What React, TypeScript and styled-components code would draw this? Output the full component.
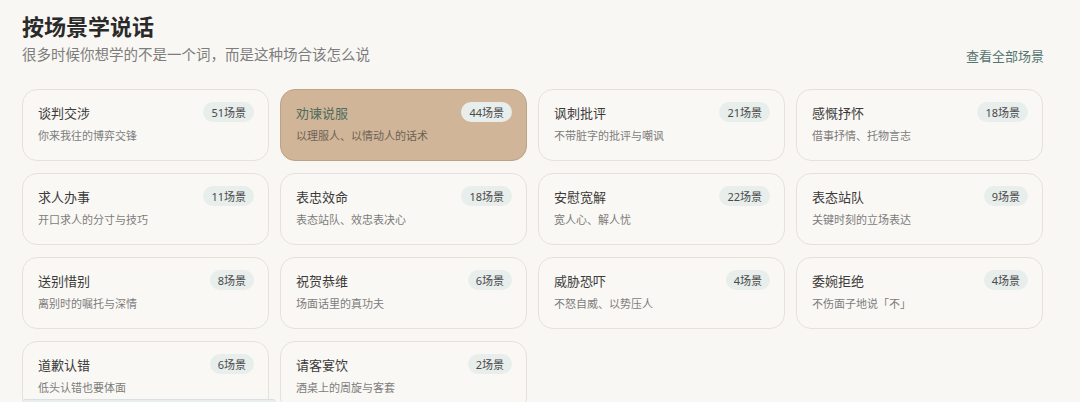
import React from "react";
import styled, { createGlobalStyle } from "styled-components";

const GlobalStyle = createGlobalStyle`
    html, body {
        margin: 0;
        padding: 0;
        background: #f9f7f3;
        font-family: "Noto Sans CJK SC", "Noto Sans", sans-serif;
        overflow: hidden;
    }
`;

const Page = styled.div`
    padding: 10px 36px 0 22px;
`;

const Header = styled.div`
    display: flex;
    align-items: flex-end;
    justify-content: space-between;
    margin-bottom: 24px;
`;

const Title = styled.h1`
    margin: 0;
    font-size: 22px;
    font-weight: 700;
    line-height: 30px;
    color: #2a2a2a;
`;

const Subtitle = styled.p`
    margin: 3px 0 0;
    font-size: 14.5px;
    line-height: 22px;
    color: #7d7d7d;
`;

const MoreLink = styled.a`
    font-size: 13px;
    line-height: 20px;
    color: #557571;
    text-decoration: none;
    margin-bottom: -1px;
`;

const Grid = styled.div`
    display: grid;
    grid-template-columns: repeat(4, 247px);
    column-gap: 11px;
    row-gap: 12px;
`;

const Card = styled.div<{ $active?: boolean }>`
    box-sizing: border-box;
    height: 72px;
    padding: 12px 14px 0 15px;
    border-radius: 15px;
    border: 1px solid ${(p) => (p.$active ? "#bca286" : "#e7e1d9")};
    background: ${(p) => (p.$active ? "#d0b598" : "#faf8f4")};
`;

const CardTop = styled.div`
    display: flex;
    align-items: center;
    justify-content: space-between;
    height: 20px;
`;

const CardName = styled.span<{ $active?: boolean }>`
    font-size: 13px;
    color: ${(p) => (p.$active ? "#4d6c5b" : "#3a3a3a")};
`;

const Badge = styled.span`
    display: inline-flex;
    align-items: center;
    height: 20px;
    padding: 0 8px;
    border-radius: 10px;
    background: #e7eeec;
    color: #4a4a4a;
    font-family: "Noto Sans", "Noto Sans CJK SC", sans-serif;
    font-size: 11px;
`;

const CardDesc = styled.div<{ $active?: boolean }>`
    margin-top: 5px;
    font-size: 11px;
    line-height: 16px;
    color: ${(p) => (p.$active ? "#6d6256" : "#7c7c7c")};
`;

// edge of a floating panel peeking in from below
const Peek = styled.div`
    position: fixed;
    left: 22px;
    top: 399px;
    width: 254px;
    height: 20px;
    border-top: 1px solid #d9e0e4;
    background: #e9eef1;
    border-radius: 4px 4px 0 0;
`;

type Scene = { name: string; desc: string; count: number; active?: boolean };

const scenes: Scene[] = [
    { name: "谈判交涉", desc: "你来我往的博弈交锋", count: 51 },
    { name: "劝谏说服", desc: "以理服人、以情动人的话术", count: 44, active: true },
    { name: "讽刺批评", desc: "不带脏字的批评与嘲讽", count: 21 },
    { name: "感慨抒怀", desc: "借事抒情、托物言志", count: 18 },
    { name: "求人办事", desc: "开口求人的分寸与技巧", count: 11 },
    { name: "表忠效命", desc: "表态站队、效忠表决心", count: 18 },
    { name: "安慰宽解", desc: "宽人心、解人忧", count: 22 },
    { name: "表态站队", desc: "关键时刻的立场表达", count: 9 },
    { name: "送别惜别", desc: "离别时的嘱托与深情", count: 8 },
    { name: "祝贺恭维", desc: "场面话里的真功夫", count: 6 },
    { name: "威胁恐吓", desc: "不怒自威、以势压人", count: 4 },
    { name: "委婉拒绝", desc: "不伤面子地说「不」", count: 4 },
    { name: "道歉认错", desc: "低头认错也要体面", count: 6 },
    { name: "请客宴饮", desc: "酒桌上的周旋与客套", count: 2 },
];

export default function App() {
    return (
        <>
            <GlobalStyle />
            <Page>
                <Header>
                    <div>
                        <Title>按场景学说话</Title>
                        <Subtitle>很多时候你想学的不是一个词，而是这种场合该怎么说</Subtitle>
                    </div>
                    <MoreLink href="#">查看全部场景</MoreLink>
                </Header>
                <Grid>
                    {scenes.map((s) => (
                        <Card key={s.name} $active={s.active}>
                            <CardTop>
                                <CardName $active={s.active}>{s.name}</CardName>
                                <Badge>{s.count}场景</Badge>
                            </CardTop>
                            <CardDesc $active={s.active}>{s.desc}</CardDesc>
                        </Card>
                    ))}
                </Grid>
            </Page>
            <Peek />
        </>
    );
}
